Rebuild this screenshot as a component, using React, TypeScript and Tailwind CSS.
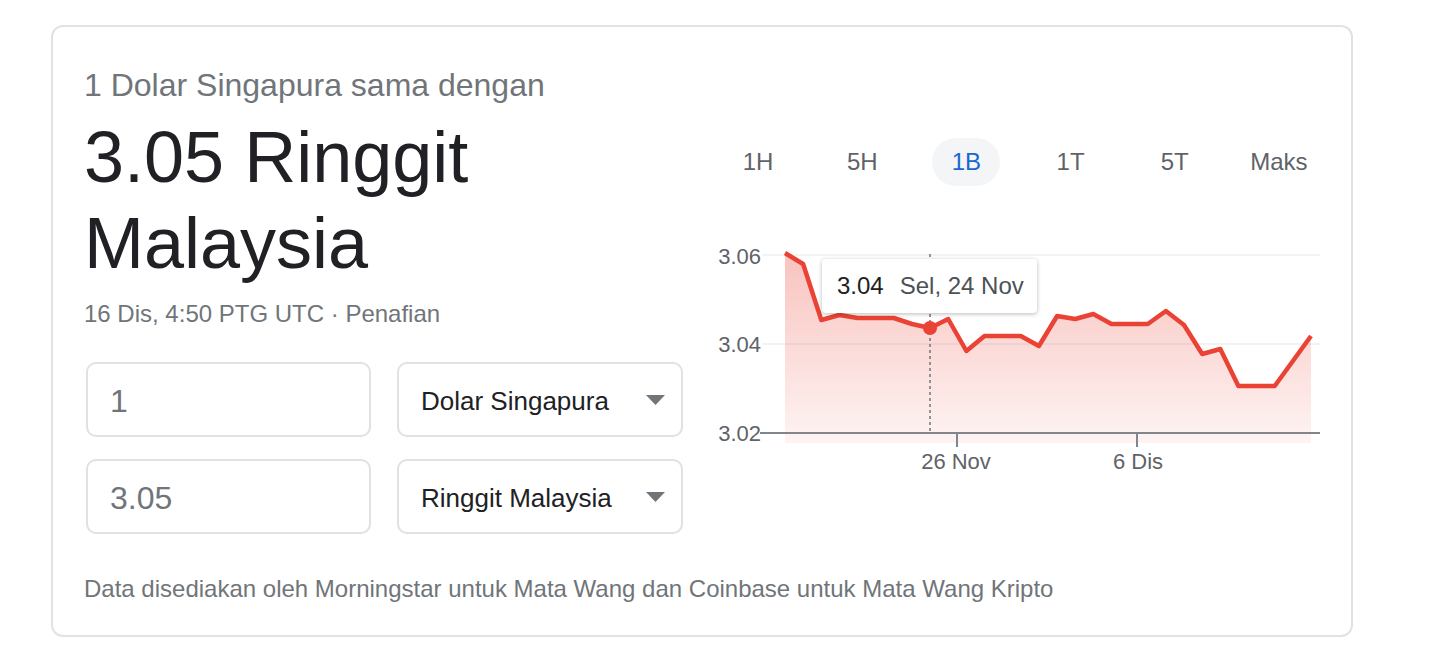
import React from "react";

const tabs = ["1H", "5H", "1B", "1T", "5T", "Maks"];

// chart points in chart-local coords (chart box starts at page x 706, y 200)
const ys = [
  253, 264, 320, 315, 318, 318, 318, 324, 328, 319, 351, 336, 336, 336, 346,
  316, 319, 314, 324, 324, 324, 311, 325, 354, 349, 386, 386, 386, 361, 336,
];
const x0 = 785 - 706;
const step = (1311 - 785) / (ys.length - 1);
const pts = ys.map((y, i) => [x0 + i * step, y - 200] as const);
const linePath = pts.map(([x, y], i) => `${i ? "L" : "M"}${x.toFixed(1)},${y}`).join(" ");
const areaPath = `${linePath} L${pts[pts.length - 1][0].toFixed(1)},243 L${x0},243 Z`;

function Field({ value }: { value: string }) {
  return (
    <div className="flex h-[75px] w-[285px] items-center rounded-[10px] border-2 border-[#dfe1e5] pl-[22px] pt-[3px] text-[32px] text-[#70757a]">
      {value}
    </div>
  );
}

function Picker({ label }: { label: string }) {
  return (
    <div className="flex h-[75px] w-[286px] items-center justify-between rounded-[10px] border-2 border-[#dfe1e5] pl-[22px] pr-[16px] text-[26px] text-[#202124]">
      <span className="pt-[3px]">{label}</span>
      <svg width="19" height="10" viewBox="0 0 19 10">
        <path d="M0 0h19L9.5 10z" fill="#70757a" />
      </svg>
    </div>
  );
}

function Chart() {
  return (
    <div className="relative h-[290px] w-[625px]">
      <svg width="625" height="290" className="block">
        <defs>
          <linearGradient id="fill" x1="0" y1="53" x2="0" y2="243" gradientUnits="userSpaceOnUse">
            <stop offset="0" stopColor="#ea4335" stopOpacity="0.32" />
            <stop offset="1" stopColor="#ea4335" stopOpacity="0.06" />
          </linearGradient>
        </defs>
        <line x1="56" y1="55" x2="614" y2="55" stroke="#f1f3f4" strokeWidth="2" />
        <line x1="56" y1="144" x2="614" y2="144" stroke="#f1f3f4" strokeWidth="2" />
        <path d={areaPath} fill="url(#fill)" />
        <line x1="54" y1="233" x2="614" y2="233" stroke="#80868b" strokeWidth="2" />
        <line x1="251" y1="233" x2="251" y2="247" stroke="#80868b" strokeWidth="2" />
        <line x1="431" y1="233" x2="431" y2="247" stroke="#80868b" strokeWidth="2" />
        <line x1="224" y1="54" x2="224" y2="233" stroke="#70757a" strokeWidth="1.5" strokeDasharray="3 3" />
        <path d={linePath} fill="none" stroke="#ea4335" strokeWidth="4.5" strokeLinejoin="round" />
        <circle cx="224" cy="128" r="7" fill="#ea4335" />
        <g fill="#5f6368" fontSize="22" fontFamily="'Liberation Sans', Arial, sans-serif">
          <text x="55" y="64" textAnchor="end">3.06</text>
          <text x="55" y="152" textAnchor="end">3.04</text>
          <text x="55" y="241" textAnchor="end">3.02</text>
          <text x="250" y="269" textAnchor="middle">26 Nov</text>
          <text x="432" y="269" textAnchor="middle">6 Dis</text>
        </g>
      </svg>
      {/* tooltip */}
      <div className="absolute left-[116px] top-[59px] flex h-[54px] w-[215px] items-center gap-[16px] rounded-[4px] bg-white pl-[15px] text-[24px] shadow-[0_1px_4px_rgba(0,0,0,0.28)]">
        <span className="text-[#202124]">3.04</span>
        <span className="text-[#4d5156]">Sel, 24 Nov</span>
      </div>
    </div>
  );
}

export default function App() {
  return (
    <div className="min-h-screen bg-white pl-[51px] pt-[25px] font-['Liberation_Sans',Arial,sans-serif]">
      <div className="flex h-[612px] w-[1302px] flex-col rounded-[12px] border-2 border-[#e0e2e6] pl-[31px] pt-[38px]">
        <div className="flex gap-[22px]">
          {/* left column */}
          <div className="w-[600px]">
            <div className="text-[32px] leading-[40px] text-[#70757a]">1 Dolar Singapura sama dengan</div>
            <div className="mt-[9px] text-[72px] leading-[86px] text-[#202124]">
              3.05 Ringgit
              <br />
              Malaysia
            </div>
            <div className="mt-[12px] text-[24px] leading-[32px] text-[#70757a]">
              16 Dis, 4:50 PTG UTC · Penafian
            </div>
            <div className="mt-[32px] flex flex-col gap-[22px] pl-[2px]">
              <div className="flex gap-[26px]">
                <Field value="1" />
                <Picker label="Dolar Singapura" />
              </div>
              <div className="flex gap-[26px]">
                <Field value="3.05" />
                <Picker label="Ringgit Malaysia" />
              </div>
            </div>
          </div>

          {/* right column */}
          <div className="w-[625px] pt-[73px]">
            <div className="grid h-[48px] grid-cols-6 text-[24px] text-[#5f6368]">
              {tabs.map((t) => (
                <div key={t} className="flex items-center justify-center">
                  {t === "1B" ? (
                    <span className="flex h-[48px] w-[68px] items-center justify-center rounded-full bg-[#f3f5f7] text-[#1967d2]">
                      {t}
                    </span>
                  ) : (
                    <span>{t}</span>
                  )}
                </div>
              ))}
            </div>
            <div className="mt-[14px]">
              <Chart />
            </div>
          </div>
        </div>

        <div className="mt-auto mb-[30px] text-[24px] leading-[32px] text-[#70757a]">
          Data disediakan oleh Morningstar untuk Mata Wang dan Coinbase untuk Mata Wang Kripto
        </div>
      </div>
    </div>
  );
}
